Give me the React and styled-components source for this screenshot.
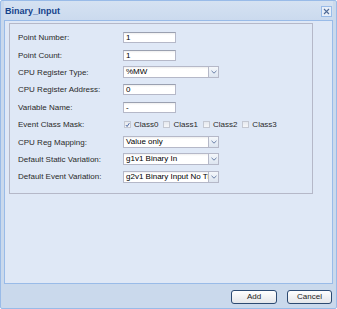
import React from "react";
import styled, { createGlobalStyle } from "styled-components";

const Global = createGlobalStyle`
  body {
    margin: 0;
    background: #ffffff;
    font-family: "Liberation Sans", Arial, sans-serif;
  }
`;

const Window = styled.div`
  width: 337px;
  height: 309px;
  box-sizing: border-box;
  border: 1px solid #99bbe8;
  border-radius: 2px;
  background: #cad9ec;
  padding: 0 3px;
  display: flex;
  flex-direction: column;
`;

const Header = styled.div`
  height: 19px;
  display: flex;
  align-items: center;
  justify-content: space-between;
  padding: 0 1px 0 1px;
  background: linear-gradient(#d5e2f2, #cbdaee);
`;

const Title = styled.span`
  font-size: 9px;
  font-weight: bold;
  color: #15428b;
`;

const Close = styled.div`
  width: 9px;
  height: 9px;
  margin-top: 1px;
  border: 1px solid #99bbe8;
  background: #e8eff9;
  display: flex;
  align-items: center;
  justify-content: center;
`;

const Body = styled.div`
  flex: 1;
  box-sizing: border-box;
  border: 1px solid #99bbe8;
  background: #dfe8f6;
  padding: 2px 19px 0 4px;
`;

const Fieldset = styled.div`
  height: 171px;
  box-sizing: border-box;
  border: 1px solid #b5b8c8;
  padding: 5px 0 0 8px;
  display: grid;
  grid-template-columns: 105px 1fr;
  grid-auto-rows: 17.4px;
  align-items: center;
  align-content: start;
`;

const Label = styled.label`
  font-size: 8px;
  color: #2a2a2a;
`;

const TextField = styled.div`
  width: 53px;
  height: 11px;
  box-sizing: border-box;
  border: 1px solid #b5b8c8;
  border-top-color: #9aa0b0;
  background: linear-gradient(#eeeeee 0, #ffffff 2px);
  font-size: 8px;
  line-height: 9px;
  padding-left: 2px;
  color: #000000;
`;

const Combo = styled.div`
  width: 96px;
  height: 12px;
  box-sizing: border-box;
  display: flex;
  border: 1px solid #b5b8c8;
  background: linear-gradient(#eeeeee 0, #ffffff 2px);
`;

const ComboText = styled.span`
  flex: 1;
  font-size: 8px;
  line-height: 10px;
  padding-left: 2px;
  overflow: hidden;
  white-space: nowrap;
  color: #000000;
`;

const ComboTrigger = styled.span`
  width: 9px;
  border-left: 1px solid #b5b8c8;
  background: linear-gradient(#f4f7fb, #dde5f0);
  display: flex;
  align-items: center;
  justify-content: center;
`;

const Checks = styled.div`
  display: flex;
  align-items: center;
  gap: 5px;
  padding-left: 1px;
`;

const CheckItem = styled.span`
  display: flex;
  align-items: center;
  font-size: 8px;
  color: #2a2a2a;
`;

const Box = styled.span`
  width: 7px;
  height: 7px;
  box-sizing: border-box;
  border: 1px solid #c4c8d2;
  background: linear-gradient(#e6e9ef, #f6f7f9);
  margin-right: 3px;
  display: flex;
  align-items: center;
  justify-content: center;
`;

const Footer = styled.div`
  height: 24px;
  display: flex;
  align-items: center;
  justify-content: flex-end;
  gap: 10px;
  padding-right: 1px;
`;

const Button = styled.button`
  width: ${(p) => p.$w}px;
  height: 14px;
  box-sizing: border-box;
  border: 1px solid #2c4a72;
  border-radius: 3px;
  background: linear-gradient(#ffffff, #e4e6ea);
  font-family: "Liberation Sans", Arial, sans-serif;
  font-size: 8px;
  color: #222222;
  padding: 0;
  margin-top: 1px;
`;

const Arrow = () => (
  <svg width="6" height="4" viewBox="0 0 6 4">
    <path d="M0.5 0.8 L3 3.2 L5.5 0.8" fill="none" stroke="#6a80a8" strokeWidth="1" />
  </svg>
);

const Field = ({ label, value }) => (
  <>
    <Label>{label}</Label>
    <TextField>{value}</TextField>
  </>
);

const Select = ({ label, value }) => (
  <>
    <Label>{label}</Label>
    <Combo>
      <ComboText>{value}</ComboText>
      <ComboTrigger>
        <Arrow />
      </ComboTrigger>
    </Combo>
  </>
);

const classes = [
  { name: "Class0", checked: true },
  { name: "Class1", checked: false },
  { name: "Class2", checked: false },
  { name: "Class3", checked: false },
];

const App = () => {
  return (
    <>
      <Global />
      <Window>
        <Header>
          <Title>Binary_Input</Title>
          <Close>
            <svg width="7" height="7" viewBox="0 0 7 7">
              <path d="M1 1 L6 6 M6 1 L1 6" stroke="#4f6a96" strokeWidth="1.1" />
            </svg>
          </Close>
        </Header>
        <Body>
          <Fieldset>
            <Field label="Point Number:" value="1" />
            <Field label="Point Count:" value="1" />
            <Select label="CPU Register Type:" value="%MW" />
            <Field label="CPU Register Address:" value="0" />
            <Field label="Variable Name:" value="-" />
            <Label>Event Class Mask:</Label>
            <Checks>
              {classes.map((c) => (
                <CheckItem key={c.name}>
                  <Box>
                    {c.checked && (
                      <svg width="6" height="6" viewBox="0 0 6 6">
                        <path d="M1 3 L2.5 4.8 L5.2 0.8" fill="none" stroke="#3a5a9a" strokeWidth="1.1" />
                      </svg>
                    )}
                  </Box>
                  {c.name}
                </CheckItem>
              ))}
            </Checks>
            <Select label="CPU Reg Mapping:" value="Value only" />
            <Select label="Default Static Variation:" value="g1v1 Binary In" />
            <Select label="Default Event Variation:" value="g2v1 Binary Input No Time" />
          </Fieldset>
        </Body>
        <Footer>
          <Button $w={46}>Add</Button>
          <Button $w={45}>Cancel</Button>
        </Footer>
      </Window>
    </>
  );
};

export default App;
